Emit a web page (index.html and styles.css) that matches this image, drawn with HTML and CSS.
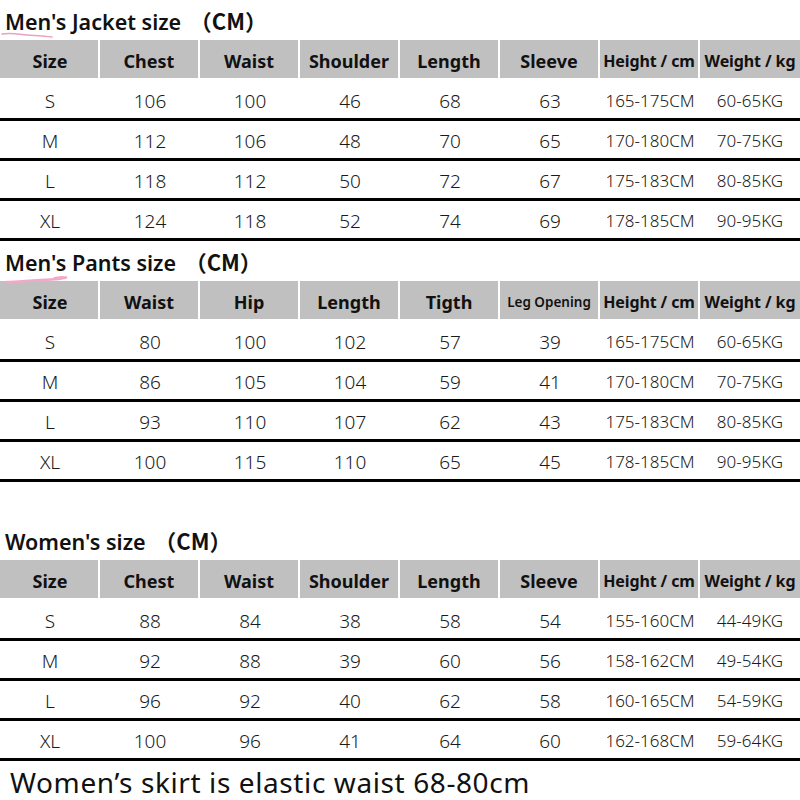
FILE: index.html
```html
<!DOCTYPE html>
<html>
<head>
<meta charset="utf-8">
<link rel="stylesheet" href="styles.css">
</head>
<body>
<div class="page">
  <div class="title">
    <span>Men's Jacket size <span class="cjk">（CM）</span></span>
    <svg class="mark mark-jacket" width="60" height="10" viewBox="0 0 60 10"><path d="M2 4 C 8 3, 14 3.5, 22 4.5 S 40 5.5, 52 7" fill="none" stroke="#eaa2c2" stroke-width="1.6" stroke-linecap="round"/></svg>
  </div>
  <div class="table">
    <div class="thead">
      <div class="th">Size</div><div class="th">Chest</div><div class="th">Waist</div><div class="th">Shoulder</div><div class="th">Length</div><div class="th">Sleeve</div><div class="th sm">Height / cm</div><div class="th sm">Weight / kg</div>
    </div>
    <div class="tr"><div class="td">S</div><div class="td">106</div><div class="td">100</div><div class="td">46</div><div class="td">68</div><div class="td">63</div><div class="td sm">165-175CM</div><div class="td sm">60-65KG</div></div>
    <div class="tr"><div class="td">M</div><div class="td">112</div><div class="td">106</div><div class="td">48</div><div class="td">70</div><div class="td">65</div><div class="td sm">170-180CM</div><div class="td sm">70-75KG</div></div>
    <div class="tr"><div class="td">L</div><div class="td">118</div><div class="td">112</div><div class="td">50</div><div class="td">72</div><div class="td">67</div><div class="td sm">175-183CM</div><div class="td sm">80-85KG</div></div>
    <div class="tr"><div class="td">XL</div><div class="td">124</div><div class="td">118</div><div class="td">52</div><div class="td">74</div><div class="td">69</div><div class="td sm">178-185CM</div><div class="td sm">90-95KG</div></div>
  </div>

  <div class="title">
    <span>Men's Pants size <span class="cjk">（CM）</span></span>
    <svg class="mark mark-pants" width="70" height="12" viewBox="0 0 70 12"><path d="M7 9 C 20 8.5, 35 7, 52 6.5 C 58 6.3, 62 5.5, 66 4.5" fill="none" stroke="#f2a8c8" stroke-width="2.6" stroke-linecap="round"/><path d="M54 5 C 58 4, 62 3.5, 64 4" fill="none" stroke="#f2a8c8" stroke-width="1.4" stroke-linecap="round"/></svg>
  </div>
  <div class="table">
    <div class="thead">
      <div class="th">Size</div><div class="th">Waist</div><div class="th">Hip</div><div class="th">Length</div><div class="th">Tigth</div><div class="th xs">Leg Opening</div><div class="th sm">Height / cm</div><div class="th sm">Weight / kg</div>
    </div>
    <div class="tr"><div class="td">S</div><div class="td">80</div><div class="td">100</div><div class="td">102</div><div class="td">57</div><div class="td">39</div><div class="td sm">165-175CM</div><div class="td sm">60-65KG</div></div>
    <div class="tr"><div class="td">M</div><div class="td">86</div><div class="td">105</div><div class="td">104</div><div class="td">59</div><div class="td">41</div><div class="td sm">170-180CM</div><div class="td sm">70-75KG</div></div>
    <div class="tr"><div class="td">L</div><div class="td">93</div><div class="td">110</div><div class="td">107</div><div class="td">62</div><div class="td">43</div><div class="td sm">175-183CM</div><div class="td sm">80-85KG</div></div>
    <div class="tr"><div class="td">XL</div><div class="td">100</div><div class="td">115</div><div class="td">110</div><div class="td">65</div><div class="td">45</div><div class="td sm">178-185CM</div><div class="td sm">90-95KG</div></div>
  </div>

  <div class="title women">
    <span>Women's size <span class="cjk">（CM）</span></span>
  </div>
  <div class="table">
    <div class="thead">
      <div class="th">Size</div><div class="th">Chest</div><div class="th">Waist</div><div class="th">Shoulder</div><div class="th">Length</div><div class="th">Sleeve</div><div class="th sm">Height / cm</div><div class="th sm">Weight / kg</div>
    </div>
    <div class="tr"><div class="td">S</div><div class="td">88</div><div class="td">84</div><div class="td">38</div><div class="td">58</div><div class="td">54</div><div class="td sm">155-160CM</div><div class="td sm">44-49KG</div></div>
    <div class="tr"><div class="td">M</div><div class="td">92</div><div class="td">88</div><div class="td">39</div><div class="td">60</div><div class="td">56</div><div class="td sm">158-162CM</div><div class="td sm">49-54KG</div></div>
    <div class="tr"><div class="td">L</div><div class="td">96</div><div class="td">92</div><div class="td">40</div><div class="td">62</div><div class="td">58</div><div class="td sm">160-165CM</div><div class="td sm">54-59KG</div></div>
    <div class="tr"><div class="td">XL</div><div class="td">100</div><div class="td">96</div><div class="td">41</div><div class="td">64</div><div class="td">60</div><div class="td sm">162-168CM</div><div class="td sm">59-64KG</div></div>
  </div>

  <div class="note">Women’s skirt is elastic waist 68-80cm</div>
</div>
</body>
</html>
```

FILE: styles.css
```css
html, body {
  margin: 0;
  padding: 0;
  background: #fff;
}

.page {
  width: 800px;
  height: 800px;
  overflow: hidden;
  display: flex;
  flex-direction: column;
  font-family: "Noto Sans", "Noto Sans CJK SC", sans-serif;
  color: #111;
}

.title {
  position: relative;
  height: 40px;
  line-height: 40px;
  padding-left: 5px;
  font-size: 21.5px;
  font-weight: 600;
  white-space: nowrap;
}

.title.women {
  margin-top: 38px;
}

.cjk {
  font-family: "Noto Sans CJK SC", sans-serif;
  font-weight: 600;
  font-size: 22px;
  margin-left: 3px;
}

.mark {
  position: absolute;
  left: 0;
}

.mark-jacket {
  top: 30px;
}

.mark-pants {
  top: 32px;
}

.table {
  display: flex;
  flex-direction: column;
}

.thead {
  display: grid;
  grid-template-columns: repeat(8, 100px);
  height: 38px;
  margin-bottom: 3px;
}

.th {
  display: flex;
  align-items: center;
  justify-content: center;
  padding-top: 3px;
  box-sizing: border-box;
  background: #c0c0c0;
  border-right: 2px solid #fff;
  font-size: 18px;
  font-weight: 700;
  color: #111;
  white-space: nowrap;
}

.th:first-child {
  padding-left: 2px;
}

.th:last-child {
  border-right: 0;
}

.th.sm {
  font-size: 16px;
  letter-spacing: -0.1px;
}

.th.xs {
  font-size: 13.5px;
  font-weight: 600;
}

.tr {
  display: grid;
  grid-template-columns: repeat(8, 100px);
  height: 40px;
  box-sizing: border-box;
  border-bottom: 3px solid #000;
}

.td {
  display: flex;
  align-items: center;
  justify-content: center;
  padding-top: 2px;
  font-size: 19px;
  font-weight: 300;
  color: #1a1a1a;
  white-space: nowrap;
}

.td.sm {
  font-size: 17px;
}

.note {
  height: 40px;
  box-sizing: border-box;
  line-height: 38px;
  padding-top: 2px;
  padding-left: 10px;
  font-size: 28px;
  letter-spacing: 0.6px;
  font-weight: 400;
  color: #111;
  white-space: nowrap;
}
```
